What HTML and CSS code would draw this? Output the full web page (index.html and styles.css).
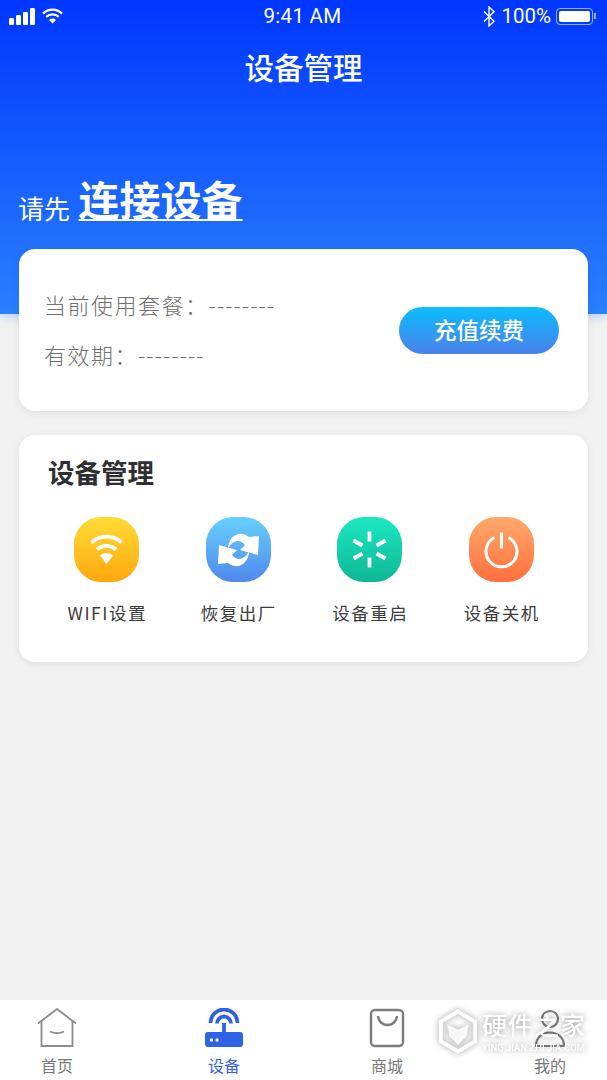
FILE: index.html
```html
<!DOCTYPE html>
<html>
<head>
    <meta charset="utf-8">
    <title>设备管理</title>
    <link rel="stylesheet" href="styles.css">
</head>
<body>
    <div class="page">
        <div class="header">
            <div class="status">
                <div class="status-left">
                    <svg width="28" height="17" viewBox="0 0 28 17"><g fill="#fff"><rect x="0" y="10" width="5" height="7" rx="1.2"/><rect x="7" y="7" width="5" height="10" rx="1.2"/><rect x="14" y="4" width="5" height="13" rx="1.2"/><rect x="21" y="0" width="5" height="17" rx="1.2"/></g></svg>
                    <svg width="21" height="16" viewBox="0 0 21 16"><g fill="none" stroke="#fff" stroke-width="2.3"><path d="M1 5.6a13.5 13.5 0 0 1 19 0"/><path d="M4.2 8.9a9 9 0 0 1 12.6 0"/></g><path d="M7 11.9a5 5 0 0 1 7 0L10.5 15.6z" fill="#fff"/></svg>
                </div>
                <div class="clock">9:41 AM</div>
                <div class="status-right">
                    <svg width="13" height="21" viewBox="0 0 13 21"><path d="M1 5.500l10 9.700L6 20V1l5 4.800L1 15.500" fill="none" stroke="#fff" stroke-width="1.400"/></svg>
                    <span class="percent">100%</span>
                    <div class="battery"><div class="battery-fill"></div></div>
                    <div class="battery-tip"></div>
                </div>
            </div>
            <div class="title">设备管理</div>
            <div class="connect"><span class="connect-small">请先</span> <span class="connect-link">连接设备</span></div>
        </div>

        <div class="content">
            <div class="card plan">
                <div class="plan-info">
                    <div class="plan-row">当前使用套餐：<span class="dashes">--------</span></div>
                    <div class="plan-row">有效期：<span class="dashes">--------</span></div>
                </div>
                <button class="recharge">充值续费</button>
            </div>

            <div class="card manage">
                <div class="manage-title">设备管理</div>
                <div class="actions">
                    <div class="action">
                        <div class="action-icon wifi">
                            <svg width="65" height="65" viewBox="0 0 65 65"><g fill="none" stroke="#fff" stroke-width="3.800"><path d="M17.500 25.500a22 22 0 0 1 30 0"/><path d="M23 32.500a14.500 14.500 0 0 1 19 0"/></g><path d="M26 38.500a10 10 0 0 1 13 0L32.500 47z" fill="#fff"/></svg>
                        </div>
                        <div class="action-label">WIFI设置</div>
                    </div>
                    <div class="action">
                        <div class="action-icon reset">
                            <svg width="65" height="65" viewBox="0 0 65 65"><g fill="#fff"><path d="M22 32C22 20 33 12 43 20L53 19 52 38 34 33 39 28C33 21 26 24 22 32z"/><path d="M43 34C43 46 32 54 22 46L12 47 13 28 31 33 26 38C32 45 39 42 43 34z"/></g></svg>
                        </div>
                        <div class="action-label">恢复出厂</div>
                    </div>
                    <div class="action">
                        <div class="action-icon restart">
                            <svg width="65" height="65" viewBox="0 0 65 65"><g stroke="#fff" stroke-width="3.800" fill="none"><path d="M32.500 14.500v10"/><path d="M32.500 40.500v10"/><path d="M16.500 23.500l9 5"/><path d="M39.500 36.500l9 5"/><path d="M16.500 41.500l9-5"/><path d="M39.500 28.500l9-5"/></g></svg>
                        </div>
                        <div class="action-label">设备重启</div>
                    </div>
                    <div class="action">
                        <div class="action-icon power">
                            <svg width="65" height="65" viewBox="0 0 65 65"><g fill="none" stroke="#fff" stroke-width="3"><path d="M32.500 15.500v16"/><path d="M25.500 20.500a15.500 15.500 0 1 0 14 0"/></g></svg>
                        </div>
                        <div class="action-label">设备关机</div>
                    </div>
                </div>
            </div>
        </div>

        <div class="tabs">
            <div class="tab">
                <svg width="40" height="40" viewBox="0 0 40 40"><g fill="none" stroke="#8c8c8c" stroke-width="1.800"><path d="M1 15.500L20 1l19 14.500"/><path d="M4.500 13v25h31V13"/><path d="M13 23.500c4 2 10 2 14 0"/></g></svg>
                <span>首页</span>
            </div>
            <div class="tab tab-active">
                <svg width="40" height="40" viewBox="0 0 40 40"><g fill="none" stroke="#2f62e6" stroke-width="3.800"><path d="M6.500 15a13.500 13.500 0 0 1 27 0"/><path d="M13 15.500a7 7 0 0 1 14 0"/><path d="M20 15v9"/></g><rect x="1" y="24" width="38" height="15" rx="3" fill="#2f62e6"/><circle cx="7.500" cy="32" r="1.700" fill="#fff"/><circle cx="13" cy="32" r="1.700" fill="#fff"/></svg>
                <span>设备</span>
            </div>
            <div class="tab">
                <svg width="40" height="40" viewBox="0 0 40 40"><g fill="none" stroke="#7d7d7d" stroke-width="2.400"><rect x="4" y="2" width="32" height="36" rx="4"/><path d="M11 8c1 12 18 12 19 0"/></g></svg>
                <span>商城</span>
            </div>
            <div class="tab">
                <svg width="40" height="40" viewBox="0 0 40 40"><g fill="none" stroke="#7d7d7d" stroke-width="2.200"><circle cx="20" cy="11" r="8"/><path d="M6 38c0-18 28-18 28 0z"/></g></svg>
                <span>我的</span>
            </div>
        </div>

        <div class="watermark">
            <svg width="38" height="45" viewBox="0 0 40 46"><path d="M20 2l18 10.500v21L20 44 2 33.500v-21z" fill="none" stroke="#fff" stroke-width="4"/><path d="M9 16l11 5 11-5-2 12-9 9-9-9z" fill="#fff" opacity=".9"/></svg>
            <div class="watermark-text">
                <div class="watermark-name">硬件之家</div>
                <div class="watermark-url">YING JIAN ZHI JIA.COM</div>
            </div>
        </div>
    </div>
</body>
</html>
```

FILE: styles.css
```css
* {
    box-sizing: border-box;
}
html, body {
    margin: 0;
    padding: 0;
}
body {
    font-family: "Noto Sans CJK SC", "Noto Sans", sans-serif;
    background: #f2f2f2;
}
.page {
    position: relative;
    width: 607px;
    height: 1080px;
    overflow: hidden;
    display: flex;
    flex-direction: column;
}

/* header */
.header {
    height: 314px;
    flex: none;
    background: linear-gradient(180deg, #0036ff 0%, #2a80ff 100%);
    color: #fff;
    box-shadow: 0 3px 10px rgba(42, 128, 255, 0.3);
}
.status {
    height: 34px;
    display: flex;
    align-items: center;
    justify-content: space-between;
    padding: 0 11px 2px 9px;
    position: relative;
}
.status-left {
    display: flex;
    align-items: center;
    gap: 5px;
    width: 200px;
}
.clock {
    font-family: Roboto, sans-serif;
    font-size: 20.500px;
    letter-spacing: 0.3px;
}
.status-right {
    width: 200px;
    display: flex;
    align-items: center;
    justify-content: flex-end;
}
.percent {
    font-family: Roboto, sans-serif;
    font-size: 20.500px;
    margin: 0 5px 0 5px;
}
.battery {
    width: 37px;
    height: 17px;
    border: 1px solid rgba(255, 255, 255, 0.6);
    border-radius: 4px;
    padding: 2px;
}
.battery-fill {
    height: 100%;
    background: #fff;
    border-radius: 2px;
}
.battery-tip {
    width: 2px;
    height: 6px;
    margin-left: 1px;
    background: rgba(255, 255, 255, 0.6);
}
.title {
    text-align: center;
    font-size: 29.500px;
    font-weight: 500;
    line-height: 40px;
    margin-top: 12px;
}
.connect {
    margin-top: 82px;
    padding-left: 18px;
    line-height: 60px;
    white-space: nowrap;
}
.connect-small {
    font-size: 26px;
    position: relative;
    top: 3px;
}
.connect-link {
    font-size: 41px;
    font-weight: 700;
    text-decoration: underline;
    text-decoration-thickness: 2px;
    text-underline-offset: 3px;
    margin-left: 5px;
}

/* cards */
.content {
    margin-top: -65px;
    padding: 0 19px;
    position: relative;
}
.card {
    background: #fff;
    border-radius: 16px;
    box-shadow: 0 2px 8px rgba(0, 0, 0, 0.08);
}
.plan {
    height: 162px;
    padding: 0 29px 0 25px;
    display: flex;
    align-items: center;
    justify-content: space-between;
}
.plan-info {
    margin-top: -3px;
}
.plan-row {
    font-size: 22px;
    font-weight: 300;
    letter-spacing: 1.500px;
    color: #707070;
    line-height: 50px;
}
.dashes {
    letter-spacing: 1px;
}
.recharge {
    width: 160px;
    height: 47px;
    border: none;
    border-radius: 24px;
    color: #fff;
    font-family: inherit;
    font-size: 22.500px;
    font-weight: 500;
    line-height: 44px;
    padding: 0 0 2px;
    background: linear-gradient(180deg, #0bbdff 0%, #4a80ea 100%);
}
.manage {
    height: 227px;
    margin-top: 24px;
    padding: 17px 21px 0 22px;
}
.manage-title {
    font-size: 26.500px;
    font-weight: 700;
    color: #2e2e33;
    line-height: 40px;
    padding-left: 7px;
}
.actions {
    display: grid;
    grid-template-columns: repeat(4, 1fr);
    margin-top: 25px;
}
.action {
    display: flex;
    flex-direction: column;
    align-items: center;
}
.action-icon {
    width: 65px;
    height: 65px;
    border-radius: 27px;
}
.action-icon svg {
    display: block;
}
.wifi {
    background: linear-gradient(180deg, #fddc36 0%, #ffa70e 100%);
}
.reset {
    background: linear-gradient(180deg, #67d0fb 0%, #4f88ee 100%);
}
.restart {
    background: linear-gradient(180deg, #1ce8c3 0%, #0db795 100%);
}
.power {
    background: linear-gradient(180deg, #ffa96b 0%, #ff6f3d 100%);
}
.action-label {
    margin-top: 18px;
    padding-left: 1px;
    font-size: 17.500px;
    letter-spacing: 1.500px;
    line-height: 26px;
    color: #3c3c3c;
    white-space: nowrap;
}

/* bottom tabs */
.tabs {
    position: absolute;
    left: 0;
    right: 0;
    bottom: 0;
    height: 80px;
    background: #fff;
    display: flex;
    gap: 103px;
    padding: 8px 0 0 27px;
}
.tab {
    width: 60px;
    display: flex;
    flex-direction: column;
    align-items: center;
    font-size: 16px;
    line-height: 22px;
    color: #777;
}
.tab svg {
    display: block;
    margin-bottom: 6px;
}
.tab-active {
    color: #2f62e6;
    margin-left: 4px;
}

/* watermark over the tab bar */
.watermark {
    position: absolute;
    left: 439px;
    top: 1009px;
    display: flex;
    gap: 5px;
    color: #fff;
    filter: drop-shadow(0 0 3px rgba(0, 0, 0, 0.4));
}
.watermark-name {
    font-size: 25px;
    font-weight: 500;
    line-height: 30px;
    letter-spacing: 1px;
}
.watermark-url {
    font-family: Roboto, sans-serif;
    font-size: 9.500px;
    font-weight: 500;
    line-height: 12px;
    margin-top: 3px;
    white-space: nowrap;
}
```
